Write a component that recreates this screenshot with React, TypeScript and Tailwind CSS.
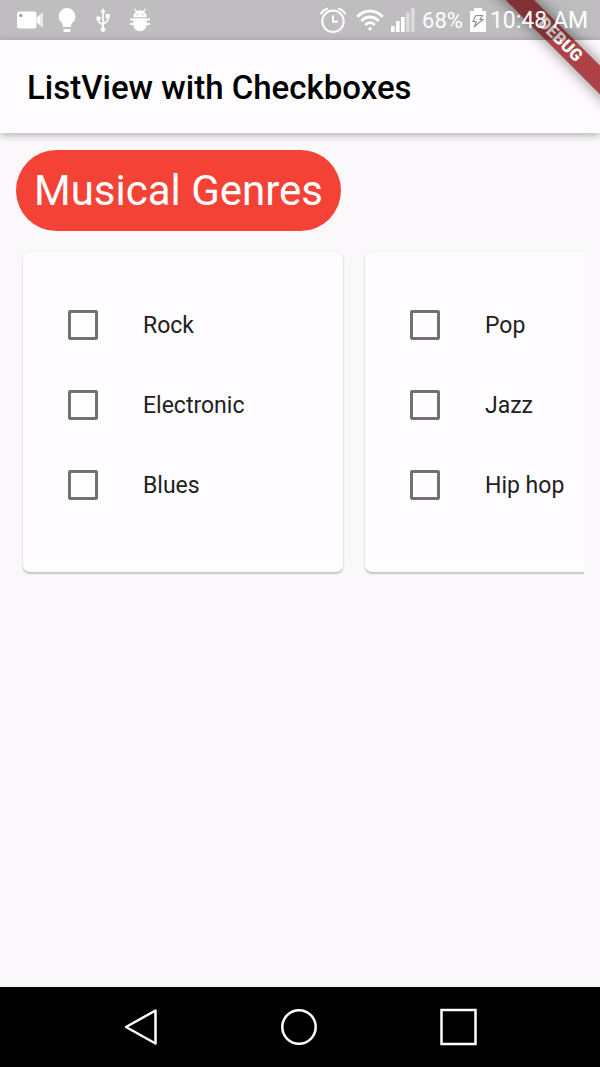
import { useState } from "react";

const genreGroups: string[][] = [
  ["Rock", "Electronic", "Blues"],
  ["Pop", "Jazz", "Hip hop"],
];

function CameraIcon() {
  return (
    <svg className="h-6 w-7" viewBox="0 0 28 24" fill="currentColor" aria-hidden="true">
      <rect x="1" y="3.500" width="19.500" height="17" rx="2.500" />
      <path d="M21 9.500l3-3v11l-3-3z" />
      <path d="M24 6l3-1.500v15L24 18z" opacity=".65" />
      <circle cx="4.800" cy="7.500" r="1.700" fill="#a5a3a5" />
    </svg>
  );
}

function BulbIcon() {
  return (
    <svg className="h-6 w-[18px]" viewBox="0 0 18 24" fill="currentColor" aria-hidden="true">
      <path d="M9 0a8.4 8.4 0 0 0-8.4 8.4c0 3.400 1.700 5 3.300 6.600.9.900 1 2.300 1.100 4h8c.1-1.700.2-3.100 1.100-4 1.600-1.600 3.300-3.200 3.300-6.600A8.400 8.400 0 0 0 9 0z" />
      <rect x="5.500" y="21" width="7" height="3" rx=".6" />
    </svg>
  );
}

function UsbIcon() {
  return (
    <svg className="h-6 w-[14px]" viewBox="0 0 14 24" fill="none" stroke="currentColor" strokeWidth="1.700" aria-hidden="true">
      <path d="M7 3v18M2.500 9v4.200c0 2.300 4.500 2 4.500 5M11.700 8v4.300c0 2.200-4.700 2-4.700 4.700" />
      <path d="M7 0l2.600 4.500H4.400z" fill="currentColor" stroke="none" />
      <circle cx="7" cy="21.500" r="2.400" fill="currentColor" stroke="none" />
      <circle cx="2.500" cy="10.500" r="2.200" fill="currentColor" stroke="none" />
      <rect x="9.600" y="6" width="4.200" height="4.200" fill="currentColor" stroke="none" />
    </svg>
  );
}

function AndroidBugIcon() {
  return (
    <svg className="h-6 w-5" viewBox="0 0 20 24" fill="currentColor" aria-hidden="true">
      <path d="M4.600 .8l2.200 3.200M15.400 .8l-2.200 3.200" stroke="currentColor" strokeWidth="1.300" />
      <path d="M3.300 9.200a6.700 7 0 0 1 13.400 0z" />
      <circle cx="7.300" cy="6.500" r=".8" fill="#bfbdbf" />
      <circle cx="12.700" cy="6.500" r=".8" fill="#bfbdbf" />
      <path d="M3.300 10.600h13.400v6a6.700 6.700 0 0 1-13.400 0z" />
      <path d="M0 11.600h20M0 16h20" stroke="currentColor" strokeWidth="2" />
    </svg>
  );
}

function AlarmIcon() {
  return (
    <svg className="h-[26px] w-[26px]" viewBox="0 0 26 26" fill="none" stroke="currentColor" strokeWidth="2" aria-hidden="true">
      <circle cx="13" cy="14.300" r="10.700" />
      <path d="M13 8.500v6.300h5" />
      <path d="M.8 7.200Q2.500 3 8 1.500M25.200 7.200Q23.500 3 18 1.500" />
    </svg>
  );
}

function WifiIcon() {
  return (
    <svg className="h-[22px] w-7" viewBox="0 0 28 22" fill="none" stroke="currentColor" strokeWidth="2.800" aria-hidden="true">
      <path d="M1.200 7.800Q7 2 14 2t12.800 5.800M5.300 12Q9.200 8 14 8t8.700 4M9.200 16Q11.400 13.700 14 13.700T18.800 16" />
      <circle cx="14" cy="19.700" r="1.700" fill="currentColor" stroke="none" />
    </svg>
  );
}

function SignalIcon() {
  return (
    <svg className="h-6 w-6" viewBox="0 0 24 24" fill="currentColor" aria-hidden="true">
      <rect x="0" y="18" width="3.700" height="6" />
      <rect x="5" y="13" width="3.700" height="11" />
      <rect x="10" y="9" width="3.700" height="15" />
      <rect x="15" y="4.500" width="3.700" height="19.500" opacity=".45" />
      <rect x="20" y="0" width="3.700" height="24" opacity=".45" />
    </svg>
  );
}

function BatteryIcon() {
  return (
    <svg className="h-6 w-4" viewBox="0 0 16 24" fill="currentColor" aria-hidden="true">
      <path d="M4 0h8v3h4v21H0V3h4z" />
      <path d="M6 7.500h6.500l-2.500 4h3L4.500 18.500l1.800-5H3z" fill="none" stroke="#8f8d8f" strokeWidth="1.100" />
    </svg>
  );
}

function StatusBar() {
  return (
    <div className="relative z-20 flex h-10 items-center justify-between bg-black/25 pr-3 pl-4 text-white">
      <div className="flex items-center gap-[14px]">
        <CameraIcon />
        <BulbIcon />
        <div className="flex items-center gap-5 pl-1.5">
          <UsbIcon />
          <AndroidBugIcon />
        </div>
      </div>
      <div className="flex items-center gap-[7px] text-[23px] leading-6">
        <div className="flex items-center gap-[10px]">
          <AlarmIcon />
          <WifiIcon />
        </div>
        <div className="flex items-center gap-[7px]">
          <SignalIcon />
          <span className="pt-0.5 text-[22px]">68%</span>
        </div>
        <div className="flex items-center gap-1">
          <BatteryIcon />
          <time className="pt-0.5">10:48 AM</time>
        </div>
      </div>
    </div>
  );
}

function DebugBanner() {
  return (
    <div className="pointer-events-none absolute top-0 right-0 z-10 h-40 w-40 overflow-hidden">
      <div className="absolute top-[30px] -right-[60px] flex h-5 w-[200px] rotate-45 items-center justify-center bg-[#ae4146] text-[17px] font-black text-white shadow-[0_0_16px_rgba(0,0,0,0.5)]">
        DEBUG
      </div>
    </div>
  );
}

function GenreCard({ genres }: { genres: string[] }) {
  const [selected, setSelected] = useState<string[]>([]);
  const toggle = (genre: string) =>
    setSelected((current) =>
      current.includes(genre) ? current.filter((g) => g !== genre) : [...current, genre],
    );

  return (
    <ul className="w-80 shrink-0 rounded-[7px] bg-[#fffdff] pt-[33px] pb-[47px] shadow-[0_2px_2px_rgba(0,0,0,0.2),0_0_2px_rgba(0,0,0,0.1)]">
      {genres.map((genre) => (
        <li key={genre}>
          <label className="flex h-20 items-center gap-[45px] pl-[45px] text-[23px] leading-7 text-[#212121]">
            <input
              type="checkbox"
              checked={selected.includes(genre)}
              onChange={() => toggle(genre)}
              className="h-[30px] w-[30px] appearance-none rounded-xs border-3 border-[#737173] checked:border-[#f44336] checked:bg-[#f44336]"
            />
            <span className="pt-0.5">{genre}</span>
          </label>
        </li>
      ))}
    </ul>
  );
}

function NavigationBar() {
  return (
    <nav className="flex h-20 items-center justify-evenly bg-black text-white">
      <button type="button" aria-label="Back">
        <svg className="h-10 w-10" viewBox="0 0 40 40" fill="none" stroke="currentColor" strokeWidth="2.500">
          <path d="M35.500 3.500v33L6 20z" strokeLinejoin="round" />
        </svg>
      </button>
      <button type="button" aria-label="Home">
        <svg className="h-10 w-10" viewBox="0 0 40 40" fill="none" stroke="currentColor" strokeWidth="2.500">
          <circle cx="19" cy="20" r="16.700" />
        </svg>
      </button>
      <button type="button" aria-label="Recent apps">
        <svg className="h-10 w-10" viewBox="0 0 40 40" fill="none" stroke="currentColor" strokeWidth="2.500">
          <rect x="1.500" y="3" width="34" height="34" />
        </svg>
      </button>
    </nav>
  );
}

export default function App() {
  return (
    <div className="relative flex min-h-screen flex-col overflow-hidden bg-[#faf8fb] font-['Roboto',sans-serif]">
      <div className="bg-[#fffdff]">
        <StatusBar />
      </div>
      <header className="flex h-[93px] items-center bg-[#fffdff] px-[27px] pt-0.5 shadow-[0_2px_8px_rgba(0,0,0,0.3)]">
        <h1 className="text-[33px] font-medium text-black">ListView with Checkboxes</h1>
      </header>
      <DebugBanner />
      <main className="flex flex-1 flex-col items-start px-4 pt-[17px]">
        <h2 className="rounded-full bg-[#f44336] px-[18px] py-4 text-[42px] leading-[49px] text-white">
          Musical Genres
        </h2>
        <div className="flex w-full gap-[22px] overflow-hidden pt-[21px] pb-4 pl-[7px]">
          {genreGroups.map((genres) => (
            <GenreCard key={genres[0]} genres={genres} />
          ))}
        </div>
      </main>
      <NavigationBar />
    </div>
  );
}
